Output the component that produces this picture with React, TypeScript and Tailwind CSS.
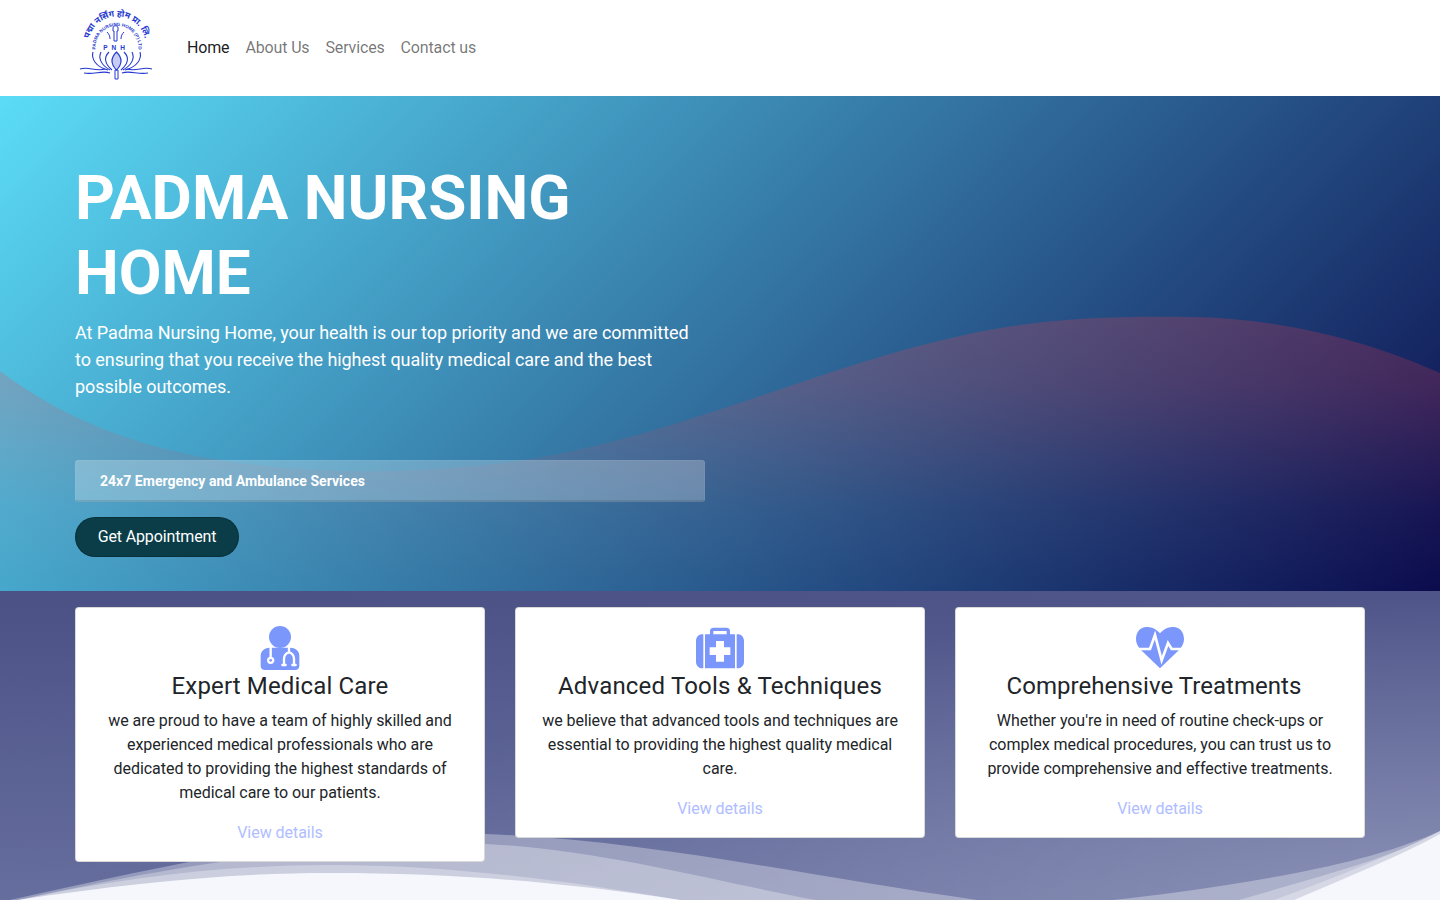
import React from 'react';

function DoctorIcon() {
  return (
    <svg viewBox="48 27 144 144" className="w-12 h-12">
      <circle cx="120" cy="66" r="33" fill="#7c97fb" />
      <path d="M62 122c0-14 12-24 28-24h60c16 0 28 10 28 24v30c0 8-5 13-13 13H75c-8 0-13-5-13-13z" fill="#7c97fb" />
      <path d="M92 96v30 M147 96v17 M132 150v-19c0-10 7-18 15-18s15 8 15 18v19" fill="none" stroke="#fff" strokeWidth="7" />
      <path d="M127 150h10 M157 150h10" stroke="#fff" strokeWidth="7" strokeLinecap="round" />
      <circle cx="92" cy="136" r="11" fill="#fff" />
      <circle cx="92" cy="136" r="4" fill="#7c97fb" />
    </svg>
  );
}

function MedkitIcon() {
  return (
    <svg viewBox="48 27 144 144" className="w-12 h-12">
      <path d="M48 78c0-12 8-20 20-20h2v102h-2c-12 0-20-8-20-20z M192 78c0-12-8-20-20-20h-2v102h2c12 0 20-8 20-20z" fill="#7c97fb" />
      <path d="M90 58V48c0-6 4-10 10-10h40c6 0 10 4 10 10v10h15v102H75V58z M100 58h40V48h-40z" fill="#7c97fb" fillRule="evenodd" />
      <path d="M108 78h24v19h19v23h-19v20h-24v-20H89V97h19z" fill="#fff" />
    </svg>
  );
}

function HeartIcon() {
  return (
    <svg viewBox="48 27 144 144" className="w-12 h-12">
      <path d="M120 55C105 38 90 36 80 36 60 36 48 52 48 72c0 16 10 28 18 36l54 52 54-52c8-8 18-20 18-36 0-20-12-36-32-36-10 0-25 2-40 19z" fill="#7c97fb" />
      <path d="M48 102h42l15-42 20 76 19-52 11 18h37" fill="none" stroke="#fff" strokeWidth="8" />
    </svg>
  );
}

const cards = [
  {
    icon: <DoctorIcon />,
    title: 'Expert Medical Care',
    titleClass: 'tracking-[0.15px]',
    text: 'we are proud to have a team of highly skilled and experienced medical professionals who are dedicated to providing the highest standards of medical care to our patients.',
  },
  {
    icon: <MedkitIcon />,
    title: 'Advanced Tools & Techniques',
    titleClass: 'tracking-[0.18px]',
    text: 'we believe that advanced tools and techniques are essential to providing the highest quality medical care.',
  },
  {
    icon: <HeartIcon />,
    title: 'Comprehensive Treatments',
    titleClass: 'pr-3 tracking-[0.04px]',
    text: "Whether you're in need of routine check-ups or complex medical procedures, you can trust us to provide comprehensive and effective treatments.",
  },
];

function Logo() {
  return (
    <svg viewBox="0 0 80 80" className="w-[80px] h-[80px]" fill="none" stroke="#2438d0">
      <defs>
        <path id="logo-outer" d="M13 46 A28.500 28.500 0 1 1 67 46" />
        <path id="logo-inner" d="M19 44 A21.500 21.500 0 1 1 61 44" />
      </defs>
      <text fontSize="8.5" fill="#2438d0" stroke="none" textAnchor="middle" fontFamily="'Noto Sans', sans-serif" fontWeight="700">
        <textPath href="#logo-outer" startOffset="50%">पद्मा नर्सिंग होम प्रा. लि.</textPath>
      </text>
      <text fontSize="4.6" fill="#2438d0" stroke="none" textAnchor="middle" fontWeight="700" fontFamily="'Liberation Sans', sans-serif">
        <textPath href="#logo-inner" startOffset="50%">PADMA NURSING HOME (P) LTD</textPath>
      </text>
      <text x="39" y="42" textAnchor="middle" fontSize="6.5" fontWeight="700" fill="#2438d0" stroke="none" letterSpacing="4" fontFamily="'Liberation Sans', sans-serif">PNH</text>
      <path d="M36 20c0-3 5-3 5 0v3h-1v10h-3V23h-1z M30 24c2 2 3 4 3 7 M47 24c-2 2-3 4-3 7" strokeWidth="1" />
      <g strokeWidth="1.1">
        <path d="M39.500 44c-6 6-6 12 0 18 6-6 6-12 0-18z" fill="#2438d0" fillOpacity="0.25" />
        <path d="M32 44c-5 5-5 11 3 18 M47 44c5 5 5 11-3 18" />
        <path d="M24 44c-3 6 0 13 9 18 M55 44c3 6 0 13-9 18" />
        <path d="M16 44c-2 7 3 15 15 18 M63 44c2 7-3 15-15 18" />
      </g>
      <path d="M3 61c9-3 15 3 25 0 M75 61c-9-3-15 3-25 0 M7 65c10 2 18-3 26 0 M71 65c-10 2-18-3-26 0" strokeWidth="1.1" />
      <path d="M38 62h3v9h-3z" strokeWidth="1" />
    </svg>
  );
}

export default function App() {
  return (
    <div className="font-['Roboto',sans-serif] text-[#212529] h-[900px] overflow-hidden bg-white">
      <nav className="h-24 flex items-center pl-[77px]">
        <Logo />
        <ul className="flex gap-4 ml-[30px] text-base tracking-[-0.15px]">
          <li className="text-black/90">Home</li>
          <li className="text-black/55">About Us</li>
          <li className="text-black/55">Services</li>
          <li className="text-black/55">Contact us</li>
        </ul>
      </nav>

      <section className="relative h-[495px] overflow-hidden bg-[linear-gradient(135deg,#5bdcf7,#0b0b4d)]">
        <svg className="absolute inset-0 w-full h-full" viewBox="0 0 1440 495" preserveAspectRatio="none">
          <defs>
            <linearGradient id="hero-wave" gradientUnits="userSpaceOnUse" x1="0" y1="221" x2="0" y2="495">
              <stop offset="0" stopColor="#ff3c46" stopOpacity="0.22" />
              <stop offset="0.25" stopColor="#ff3c46" stopOpacity="0.19" />
              <stop offset="0.7" stopColor="#ff3c46" stopOpacity="0.04" />
              <stop offset="1" stopColor="#ff3c46" stopOpacity="0" />
            </linearGradient>
          </defs>
          <path
            d="M0 275 C60 320 130 350 220 364 C320 380 420 378 520 365 C680 340 820 270 960 240 C1040 222 1110 220 1190 221 C1280 222 1370 245 1440 277 L1440 495 L0 495 Z"
            fill="url(#hero-wave)"
          />
        </svg>
        <div className="relative px-[75px] pt-16 w-[780px]">
          <h1 className="text-[62px] leading-[75px] font-bold text-white">PADMA NURSING HOME</h1>
          <p className="mt-[9px] text-lg leading-[27px] text-white tracking-[-0.06px]">
            At Padma Nursing Home, your health is our top priority and we are committed to ensuring that you receive the highest quality medical care and the best possible outcomes.
          </p>
          <div className="mt-[60px] h-[42px] flex items-center pl-[24px] text-sm font-bold text-white bg-white/25 border border-white/5 border-b-2 border-b-black/10 rounded-[3px] tracking-[0.03px]">
            24x7 Emergency and Ambulance Services
          </div>
          <button className="mt-[15px] h-10 w-[164px] rounded-[20px] bg-[#0a3d47] border border-black/20 text-white text-base tracking-[-0.13px]">
            Get Appointment
          </button>
        </div>
      </section>

      <section className="relative h-[309px] overflow-hidden bg-[radial-gradient(ellipse_1100px_300px_at_100%_100%,rgba(255,255,255,0.22),transparent),linear-gradient(178deg,#4b5085,#6a73a2)]">
        <svg className="absolute inset-0 w-full h-full" viewBox="0 0 1440 309" preserveAspectRatio="none">
          <path d="M10 309 C150 279 300 240 485 243 C650 249 800 284 977 309 C1050 318 1110 310 1179 301 C1270 288 1370 272 1440 240 L1440 309 Z" fill="#fff" fillOpacity="0.32" />
          <path d="M20 309 C130 284 300 250 485 253 C600 258 720 292 816 309 L1239 309 C1320 285 1390 268 1440 240 L1440 309 Z" fill="#fff" fillOpacity="0.3" />
          <path d="M18 309 C130 285 230 274 330 274 C450 274 570 290 680 309 L1274 309 C1340 285 1400 260 1440 240 L1440 309 Z" fill="#fff" fillOpacity="0.3" />
          <path d="M18 309 C130 292 230 282 330 282 C460 282 570 292 680 309 L1294 309 C1350 285 1400 265 1440 243 L1440 309 Z" fill="#f5f7fd" />
        </svg>
        <div className="relative px-[75px] pt-4 grid grid-cols-3 gap-[30px] items-start">
          {cards.map((card) => (
            <div key={card.title} className="bg-white border border-black/15 rounded-[4px] px-6 pt-4 pb-4 text-center">
              <div className="h-12 flex justify-center">{card.icon}</div>
              <h2 className={`text-2xl leading-[28.8px] mb-2 ${card.titleClass}`}>{card.title}</h2>
              <p className="text-base leading-6 mb-4 tracking-[-0.04px]">{card.text}</p>
              <a className="block text-base leading-6 text-[#b0bdff] tracking-[-0.04px]">View details</a>
            </div>
          ))}
        </div>
      </section>
    </div>
  );
}
